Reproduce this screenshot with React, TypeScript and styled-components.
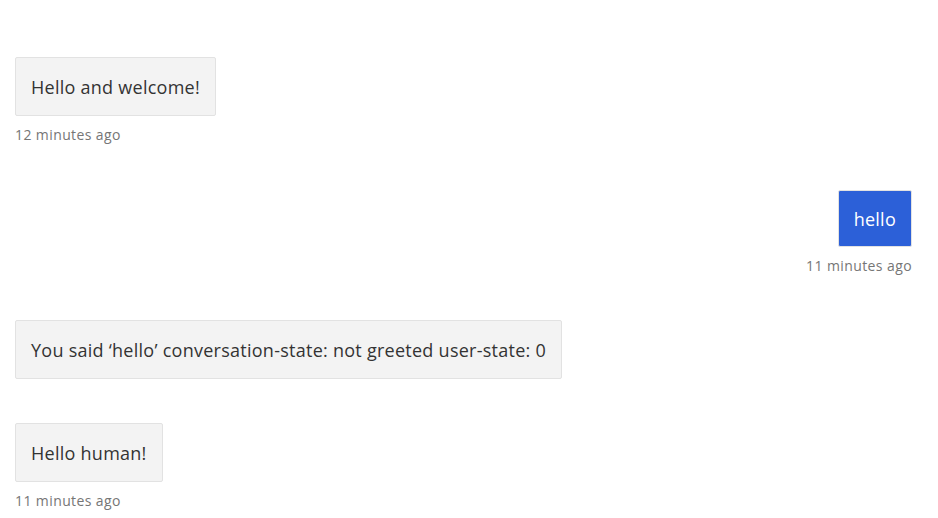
import React from 'react'
import styled, { createGlobalStyle } from 'styled-components'

type Message = { id: number; text: string; fromMe?: boolean; time?: string }

const messages: Message[] = [
  { id: 1, text: 'Hello and welcome!', time: '12 minutes ago' },
  { id: 2, text: 'hello', fromMe: true, time: '11 minutes ago' },
  { id: 3, text: 'You said \u2018hello\u2019 conversation-state: not greeted user-state: 0' },
  { id: 4, text: 'Hello human!', time: '11 minutes ago' },
]

const GlobalStyle = createGlobalStyle`
  html, body {
    margin: 0;
    padding: 0;
    background: #ffffff;
  }
  body {
    font-family: 'Open Sans', 'Noto Sans', sans-serif;
    color: #333333;
  }
`

const App: React.FC = () => {
  return <>
    <GlobalStyle />
    <ChatList>
      {messages.map(m =>
        <MessageItem key={m.id} fromMe={!!m.fromMe}>
          <Bubble fromMe={!!m.fromMe}>{m.text}</Bubble>
          {m.time && <Timestamp>{m.time}</Timestamp>}
        </MessageItem>
      )}
    </ChatList>
  </>
}

const ChatList = styled.div`
  display: flex;
  flex-direction: column;
  gap: 44px;
  padding: 57px 26px 0 15px;
  width: 938px;
  height: 518px;
  box-sizing: border-box;
  overflow: hidden;
`

const MessageItem = styled.div<{ fromMe: boolean }>`
  display: flex;
  flex-direction: column;
  align-items: ${p => (p.fromMe ? 'flex-end' : 'flex-start')};
`

const Bubble = styled.div<{ fromMe: boolean }>`
  box-sizing: border-box;
  height: ${p => (p.fromMe ? '57px' : '59px')};
  margin-top: ${p => (p.fromMe ? '1px' : '0')};
  display: flex;
  align-items: center;
  padding: 1px 15px 0;
  border: 1px solid #e2e2e2;
  border-radius: 2px;
  background: ${p => (p.fromMe ? '#2c60d8' : '#f3f3f3')};
  color: ${p => (p.fromMe ? '#ffffff' : '#333333')};
  font-size: 18px;
  letter-spacing: 0.26px;
  white-space: nowrap;
`

const Timestamp = styled.div`
  margin-top: 9px;
  font-size: 14px;
  line-height: 20px;
  color: #767676;
  letter-spacing: 0.4px;
`

export default App
